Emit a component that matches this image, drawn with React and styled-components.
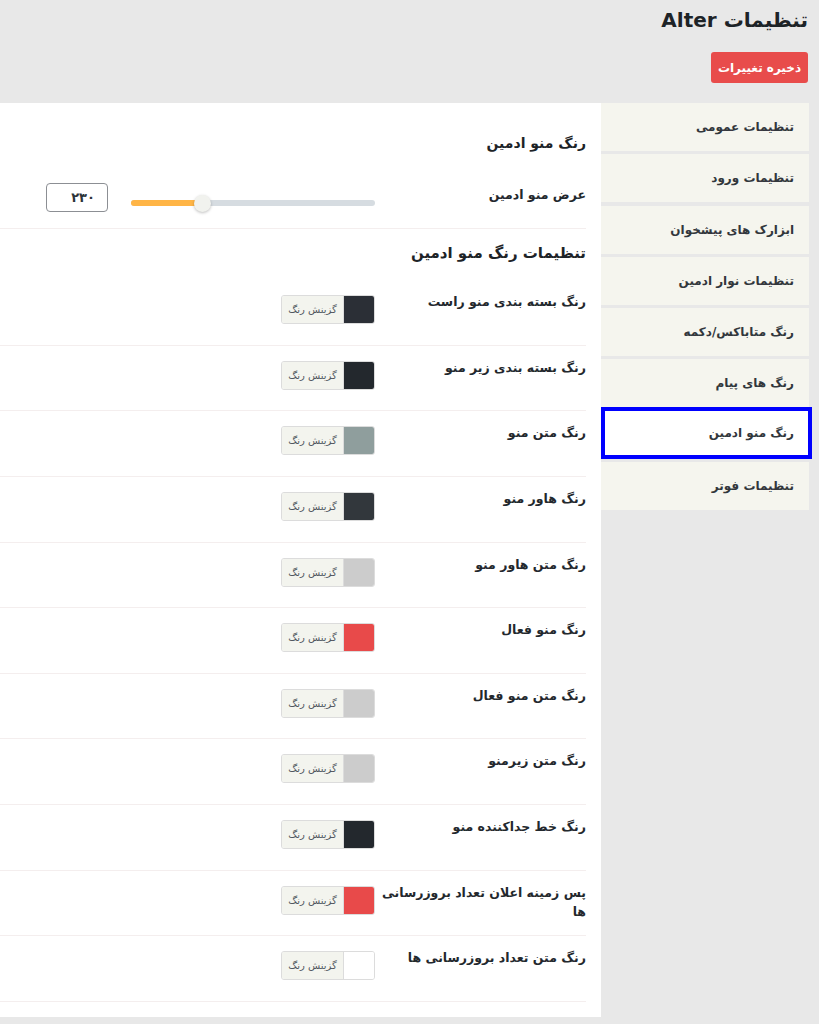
import styled, { createGlobalStyle } from "styled-components";

const GlobalStyle = createGlobalStyle`
  html, body {
    margin: 0;
    padding: 0;
    background: #e8e8e8;
  }
  body {
    font-family: "DejaVu Sans", "Noto Sans", sans-serif;
    color: #23282d;
  }
`;

const Page = styled.div`
  direction: rtl;
  min-height: 1024px;
  background: #e8e8e8;
`;

const Header = styled.div`
  padding: 6px 11px 0 10px;
`;

const Title = styled.h1`
  margin: 0;
  font-size: 20px;
  line-height: 28px;
  font-weight: 600;
  color: #1d2327;
`;

const SaveButton = styled.button`
  display: block;
  margin-top: 18px;
  width: 97px;
  height: 31px;
  border: none;
  border-radius: 3px;
  background: #e84c4b;
  color: #fff;
  font-family: inherit;
  font-size: 12px;
  font-weight: 700;
  cursor: pointer;
`;

const Body = styled.div`
  display: flex;
  align-items: flex-start;
  margin-top: 20px;
`;

const Sidebar = styled.ul`
  list-style: none;
  margin: 0 10px 0 0;
  padding: 0;
  width: 208px;
  flex-shrink: 0;
`;

const Tab = styled.li`
  box-sizing: border-box;
  height: ${(p) => (p.active ? "52px" : "48px")};
  margin: ${(p) => (p.active ? "-3.5px -3px 2.8px 0" : "0 0 3.3px 0")};
  padding-right: ${(p) => (p.active ? "14px" : "15px")};
  display: flex;
  align-items: center;
  background: ${(p) => (p.active ? "#fff" : "#f5f5ee")};
  border: ${(p) => (p.active ? "4px solid #0000ff" : "none")};
  font-size: 12px;
  font-weight: 700;
  color: #32373c;
  cursor: pointer;
`;

const Panel = styled.div`
  flex: 1;
  background: #fff;
  padding: 29px 15px 15px 0;
`;

const SectionTitle = styled.h2`
  margin: ${(p) => (p.first ? "0 0 9px" : "13px 0 16.5px")};
  font-size: ${(p) => (p.first ? "14px" : "15px")};
  line-height: 22px;
  font-weight: 700;
  color: #1d2327;
`;

const Row = styled.div`
  box-sizing: border-box;
  display: flex;
  align-items: flex-start;
  height: ${(p) => (p.tall ? "65.5px" : "65.65px")};
  padding-top: ${(p) => (p.tall ? "20px" : "15px")};
  border-bottom: 1px solid #f4eeee;
`;

const Label = styled.div`
  box-sizing: border-box;
  width: 211px;
  flex-shrink: 0;
  padding: 0 0 0 5px;
  margin-top: ${(p) => (p.tall ? "2px" : "-3px")};
  font-size: 12.5px;
  font-weight: 700;
  line-height: 19px;
  color: #23282d;
`;

const SliderField = styled.div`
  display: flex;
  align-items: flex-start;
  gap: 23px;
`;

const Slider = styled.div`
  direction: ltr;
  position: relative;
  width: 244px;
  height: 6px;
  margin-top: 17px;
  border-radius: 3px;
  background: #d6dce1;
`;

const SliderFill = styled.div`
  height: 100%;
  border-radius: 3px;
  background: #ffb546;
`;

const Thumb = styled.div`
  position: absolute;
  top: 50%;
  width: 17px;
  height: 17px;
  margin: -8.5px 0 0 -8.5px;
  border-radius: 50%;
  background: #f1f2ee;
  box-shadow: 0 1px 3px rgba(0, 0, 0, 0.25);
`;

const NumberBox = styled.div`
  box-sizing: border-box;
  width: 62px;
  height: 29px;
  padding-right: 12px;
  display: flex;
  align-items: center;
  border: 1px solid #8c8f94;
  border-radius: 4px;
  font-size: 13px;
  font-weight: 700;
  color: #2c3338;
`;

const Picker = styled.div`
  box-sizing: border-box;
  display: flex;
  width: 94px;
  height: 29px;
  border: 1px solid #dcdcdc;
  border-radius: 3px;
  overflow: hidden;
`;

const Swatch = styled.span`
  width: 30px;
  flex-shrink: 0;
  background: ${(p) => p.color};
  border-left: 1px solid #dcdcdc;
`;

const PickerText = styled.span`
  flex: 1;
  display: flex;
  align-items: center;
  justify-content: center;
  background: #f3f4ee;
  font-size: 10px;
  color: #50575e;
`;

const tabs = [
  "تنظیمات عمومی",
  "تنظیمات ورود",
  "ابزارک های پیشخوان",
  "تنظیمات نوار ادمین",
  "رنگ متاباکس/دکمه",
  "رنگ های پیام",
  "رنگ منو ادمین",
  "تنظیمات فوتر",
];

const colors = [
  ["رنگ بسته بندی منو راست", "#2b2f36"],
  ["رنگ بسته بندی زیر منو", "#23282d"],
  ["رنگ متن منو", "#8f9e9d"],
  ["رنگ هاور منو", "#32373c"],
  ["رنگ متن هاور منو", "#cccccc"],
  ["رنگ منو فعال", "#e84a4a"],
  ["رنگ متن منو فعال", "#cccccc"],
  ["رنگ متن زیرمنو", "#cccccc"],
  ["رنگ خط جداکننده منو", "#23282d"],
  ["پس زمینه اعلان تعداد بروزرسانی ها", "#e84a4a"],
  ["رنگ متن تعداد بروزرسانی ها", "#ffffff"],
];

const menuWidth = 230;
const widthMin = 160;
const widthMax = 400;

export default function App() {
  const pct = ((menuWidth - widthMin) / (widthMax - widthMin)) * 100;

  return (
    <Page>
      <GlobalStyle />
      <Header>
        <Title>تنظیمات Alter</Title>
        <SaveButton>ذخیره تغییرات</SaveButton>
      </Header>
      <Body>
        <Sidebar>
          {tabs.map((t) => (
            <Tab key={t} active={t === "رنگ منو ادمین"}>
              {t}
            </Tab>
          ))}
        </Sidebar>
        <Panel>
          <SectionTitle first>رنگ منو ادمین</SectionTitle>
          <Row tall>
            <Label tall>عرض منو ادمین</Label>
            <SliderField>
              <Slider>
                <SliderFill style={{ width: `${pct}%` }} />
                <Thumb style={{ left: `${pct}%` }} />
              </Slider>
              <NumberBox>۲۳۰</NumberBox>
            </SliderField>
          </Row>
          <SectionTitle>تنظیمات رنگ منو ادمین</SectionTitle>
          {colors.map(([label, color]) => (
            <Row key={label}>
              <Label>{label}</Label>
              <Picker>
                <Swatch color={color} />
                <PickerText>گزینش رنگ</PickerText>
              </Picker>
            </Row>
          ))}
        </Panel>
      </Body>
    </Page>
  );
}
